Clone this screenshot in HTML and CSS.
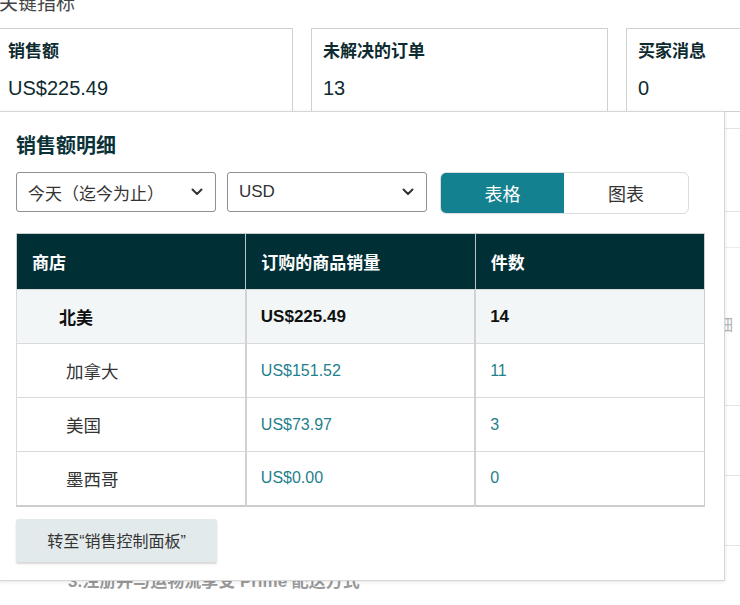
FILE: index.html
```html
<!DOCTYPE html>
<html lang="zh-CN">
<head>
<meta charset="utf-8">
<title>关键指标</title>
<link rel="stylesheet" href="styles.css">
</head>
<body>
<div class="page">
  <h2 class="section-title">关键指标</h2>
  <div class="metrics">
    <div class="metric">
      <div class="metric-label">销售额</div>
      <div class="metric-value">US$225.49</div>
    </div>
    <div class="metric">
      <div class="metric-label">未解决的订单</div>
      <div class="metric-value">13</div>
    </div>
    <div class="metric">
      <div class="metric-label">买家消息</div>
      <div class="metric-value">0</div>
    </div>
  </div>

  <div class="below">
    <div class="main-col">
      <p class="step">3.注册并与运物流享受 Prime 配送方式</p>
    </div>
    <aside class="side-col">
      <div class="side-item side-a"></div>
      <div class="side-item side-b"></div>
      <div class="side-item side-c">
        <div class="side-rule"></div>
        <div class="side-text">查看详细</div>
      </div>
      <div class="side-item side-d"></div>
      <div class="side-item side-d"></div>
    </aside>
  </div>

  <div class="popover">
    <h3 class="pop-title">销售额明细</h3>
    <div class="controls">
      <div class="select select-range">
        <span>今天（迄今为止）</span>
        <svg class="chev" width="12" height="8" viewBox="0 0 12 8"><polyline points="1.5,1.5 6,6 10.5,1.5" fill="none" stroke="#333" stroke-width="2" stroke-linecap="round" stroke-linejoin="round"/></svg>
      </div>
      <div class="select select-cur">
        <span>USD</span>
        <svg class="chev" width="12" height="8" viewBox="0 0 12 8"><polyline points="1.5,1.5 6,6 10.5,1.5" fill="none" stroke="#333" stroke-width="2" stroke-linecap="round" stroke-linejoin="round"/></svg>
      </div>
      <div class="seg">
        <div class="seg-item seg-on">表格</div>
        <div class="seg-item">图表</div>
      </div>
    </div>

    <table class="sales">
      <thead>
        <tr><th>商店</th><th>订购的商品销量</th><th>件数</th></tr>
      </thead>
      <tbody>
        <tr class="sum-row"><td class="name-sum">北美</td><td>US$225.49</td><td>14</td></tr>
        <tr><td class="name">加拿大</td><td class="num">US$151.52</td><td class="num">11</td></tr>
        <tr><td class="name">美国</td><td class="num">US$73.97</td><td class="num">3</td></tr>
        <tr><td class="name">墨西哥</td><td class="num">US$0.00</td><td class="num">0</td></tr>
      </tbody>
    </table>

    <button class="dash-btn" type="button">转至“销售控制面板”</button>
  </div>
</div>
</body>
</html>
```

FILE: styles.css
```css
* { box-sizing: border-box; }

html, body {
  margin: 0;
  padding: 0;
  background: #ffffff;
  overflow: hidden;
}

body {
  font-family: "Liberation Sans", "Noto Sans CJK SC", sans-serif;
  color: #0f1111;
}

.page {
  position: relative;
  display: flow-root;
  width: 740px;
  height: 605px;
}

.section-title {
  margin: -7px 0 0 -1px;
  font-size: 19px;
  line-height: 22px;
  font-weight: normal;
  color: #444;
}

.metrics {
  display: flex;
  gap: 18px;
  margin: 13px 0 0 -4px;
}

.metric {
  flex: 0 0 297px;
  height: 84px;
  border: 1px solid #d0d0d0;
  padding: 12px 11px 0 11px;
}

.metric-label {
  font-size: 17px;
  line-height: 22px;
  font-weight: bold;
  color: #0d2b2f;
}

.metric-value {
  margin-top: 13px;
  font-size: 20px;
  line-height: 24px;
  color: #0d2b2f;
}

.below {
  display: grid;
  grid-template-columns: 626px 1fr;
}

.main-col {
  padding-left: 68px;
}

.step {
  margin: 458px 0 0 0;
  font-size: 17px;
  line-height: 24px;
  font-weight: bold;
  color: #9a9a9a;
  white-space: nowrap;
}

.side-col {
  display: flex;
  flex-direction: column;
}

.side-item {
  border-bottom: 1px solid #e4e4e4;
}

.side-a { height: 17px; }
.side-b { height: 83px; }
.side-c { height: 194px; padding-top: 35px; }
.side-d { height: 70px; }

.side-rule {
  margin-left: 99px;
  border-top: 1px solid #ececec;
}

.side-text {
  margin-top: 68px;
  padding-left: 43px;
  font-size: 16px;
  line-height: 20px;
  color: #b4b4b4;
  white-space: nowrap;
}

/* popover overlay */
.popover {
  position: absolute;
  top: 111px;
  left: -2px;
  width: 727px;
  height: 470px;
  background: #ffffff;
  border: 1px solid #d6d6d6;
  box-shadow: 0 1px 4px rgba(0, 0, 0, 0.10);
  padding: 22px 18px 0 17px;
}

.pop-title {
  margin: 0;
  font-size: 20px;
  line-height: 24px;
  font-weight: bold;
  color: #0b3238;
}

.controls {
  display: flex;
  align-items: flex-start;
  margin-top: 14px;
}

.select {
  width: 200px;
  height: 40px;
  border: 1px solid #8d9096;
  border-radius: 3px;
  display: flex;
  align-items: center;
  justify-content: space-between;
  padding: 0 12px 0 11px;
  font-size: 17px;
  color: #333;
  background: #fff;
}

.select-cur {
  margin-left: 11px;
}

.chev { display: block; }

.seg {
  margin-left: 13px;
  width: 249px;
  height: 42px;
  display: flex;
  border: 1px solid #dadddd;
  border-radius: 6px;
  overflow: hidden;
}

.seg-item {
  flex: 1;
  display: flex;
  align-items: center;
  justify-content: center;
  font-size: 18px;
  color: #333;
}

.seg-on {
  flex: 0 0 123px;
  background: #13818f;
  color: #ffffff;
}

.sales {
  margin-top: 19px;
  width: 689px;
  border-collapse: collapse;
  table-layout: fixed;
  border: 1px solid #cdcdcd;
  border-bottom-width: 2px;
}

.sales th {
  height: 56px;
  padding: 0 15px;
  background: #002f36;
  color: #ffffff;
  font-size: 17px;
  font-weight: bold;
  text-align: left;
  border-right: 1px solid #b9c6c8;
}

.sales th:last-child { border-right: 1px solid #cdcdcd; }

.sales td {
  height: 54px;
  padding: 0 14px;
  border: 1px solid #dadada;
  border-right: 2px solid #d2d2d2;
  font-size: 16px;
  color: #333;
}

.sales td:last-child { border-right: 1px solid #cdcdcd; }

.sum-row td {
  background: #f3f6f6;
  font-size: 17px;
  font-weight: bold;
  color: #0f1111;
}

.sales td.name-sum {
  padding-left: 42px;
  font-size: 17px;
}

.sales td.name {
  padding-left: 49px;
  font-size: 17.5px;
  color: #333;
}

.sales td.num {
  color: #1f7f8c;
}

.dash-btn {
  display: block;
  margin-top: 12px;
  width: 201px;
  height: 43px;
  padding: 0;
  border: none;
  border-radius: 2px;
  background: #e3eaeb;
  box-shadow: 0 2px 2px rgba(0, 0, 0, 0.16);
  font-family: "Liberation Sans", "Noto Sans CJK SC", sans-serif;
  font-size: 16px;
  color: #333;
  text-align: center;
}
```
